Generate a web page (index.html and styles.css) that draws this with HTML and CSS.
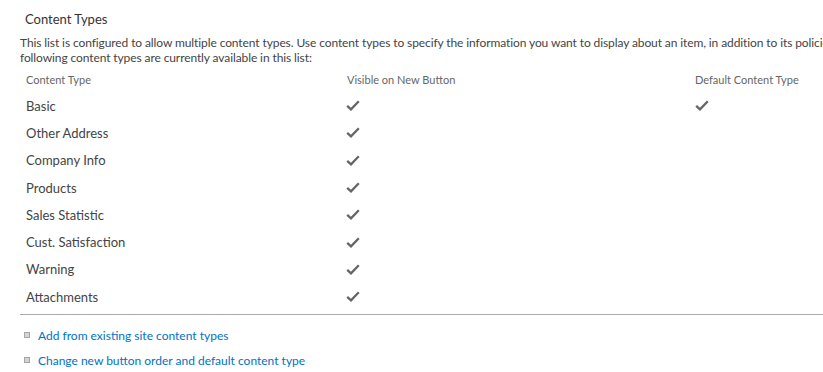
FILE: index.html
```html
<!DOCTYPE html>
<html lang="en">
<head>
<meta charset="utf-8">
<title>Content Types</title>
<link rel="stylesheet" href="styles.css">
</head>
<body>
<div class="page">
  <h2 class="title">Content Types</h2>
  <p class="desc">This list is configured to allow multiple content types. Use content types to specify the information you want to display about an item, in addition to its policies, workflows, or other behavior. The<br>following content types are currently available in this list:</p>
  <div class="grid">
    <div class="hd">Content Type</div>
    <div class="hd">Visible on New Button</div>
    <div class="hd">Default Content Type</div>

    <div class="cell">Basic</div>
    <div class="cell"><svg class="chk" viewBox="0 0 14 11"><path d="M1.2 5.8 L5 9.4 L12.8 1.2"/></svg></div>
    <div class="cell"><svg class="chk" viewBox="0 0 14 11"><path d="M1.2 5.8 L5 9.4 L12.8 1.2"/></svg></div>

    <div class="cell">Other Address</div>
    <div class="cell"><svg class="chk" viewBox="0 0 14 11"><path d="M1.2 5.8 L5 9.4 L12.8 1.2"/></svg></div>
    <div class="cell"></div>

    <div class="cell">Company Info</div>
    <div class="cell"><svg class="chk" viewBox="0 0 14 11"><path d="M1.2 5.8 L5 9.4 L12.8 1.2"/></svg></div>
    <div class="cell"></div>

    <div class="cell">Products</div>
    <div class="cell"><svg class="chk" viewBox="0 0 14 11"><path d="M1.2 5.8 L5 9.4 L12.8 1.2"/></svg></div>
    <div class="cell"></div>

    <div class="cell">Sales Statistic</div>
    <div class="cell"><svg class="chk" viewBox="0 0 14 11"><path d="M1.2 5.8 L5 9.4 L12.8 1.2"/></svg></div>
    <div class="cell"></div>

    <div class="cell">Cust. Satisfaction</div>
    <div class="cell"><svg class="chk" viewBox="0 0 14 11"><path d="M1.2 5.8 L5 9.4 L12.8 1.2"/></svg></div>
    <div class="cell"></div>

    <div class="cell">Warning</div>
    <div class="cell"><svg class="chk" viewBox="0 0 14 11"><path d="M1.2 5.8 L5 9.4 L12.8 1.2"/></svg></div>
    <div class="cell"></div>

    <div class="cell">Attachments</div>
    <div class="cell"><svg class="chk" viewBox="0 0 14 11"><path d="M1.2 5.8 L5 9.4 L12.8 1.2"/></svg></div>
    <div class="cell"></div>
  </div>
  <ul class="links">
    <li><a href="#">Add from existing site content types</a></li>
    <li><a href="#">Change new button order and default content type</a></li>
  </ul>
</div>
</body>
</html>
```
FILE: styles.css
```css
html, body {
  margin: 0;
  padding: 0;
  background: #fff;
}
body {
  font-family: Lato, "Open Sans", sans-serif;
  color: #444;
  overflow: hidden;
  width: 823px;
  height: 372px;
}
.page {
  padding: 10px 0 0 20px;
  width: 1100px;
}
.title {
  margin: 0 0 0 5px;
  font-size: 13px;
  font-weight: normal;
  line-height: 18px;
  color: #333;
}
.desc {
  margin: 7px 0 0 0;
  white-space: nowrap;
  font-size: 12px;
  letter-spacing: -0.1px;
  line-height: 15px;
  color: #444;
}
.grid {
  display: grid;
  grid-template-columns: 321px 348px 300px;
  margin-top: 7px;
  border-bottom: 1px solid #ababab;
  padding-bottom: 4px;
}
.hd {
  padding: 0 0 4px 6px;
  font-size: 11px;
  line-height: 16px;
  color: #666;
}
.cell {
  display: flex;
  align-items: center;
  height: 27.3px;
  padding-left: 6px;
  font-size: 13px;
  color: #444;
}
.grid .cell:nth-child(3n+2) {
  padding-left: 5px;
}
.chk {
  width: 14px;
  height: 11px;
  fill: none;
  stroke: #666;
  stroke-width: 2.3;
}
.links {
  list-style: none;
  margin: 11px 0 0 0;
  padding: 0;
}
.links li {
  display: flex;
  align-items: center;
  height: 18px;
  margin-bottom: 7px;
  font-size: 12px;
}
.links li::before {
  content: "";
  width: 4px;
  height: 4px;
  margin: 0 8px 0 4px;
  border: 1px solid #a6a6a6;
  background: #d4d4d4;
}
.links a {
  color: #0072c6;
  text-decoration: none;
}
```
